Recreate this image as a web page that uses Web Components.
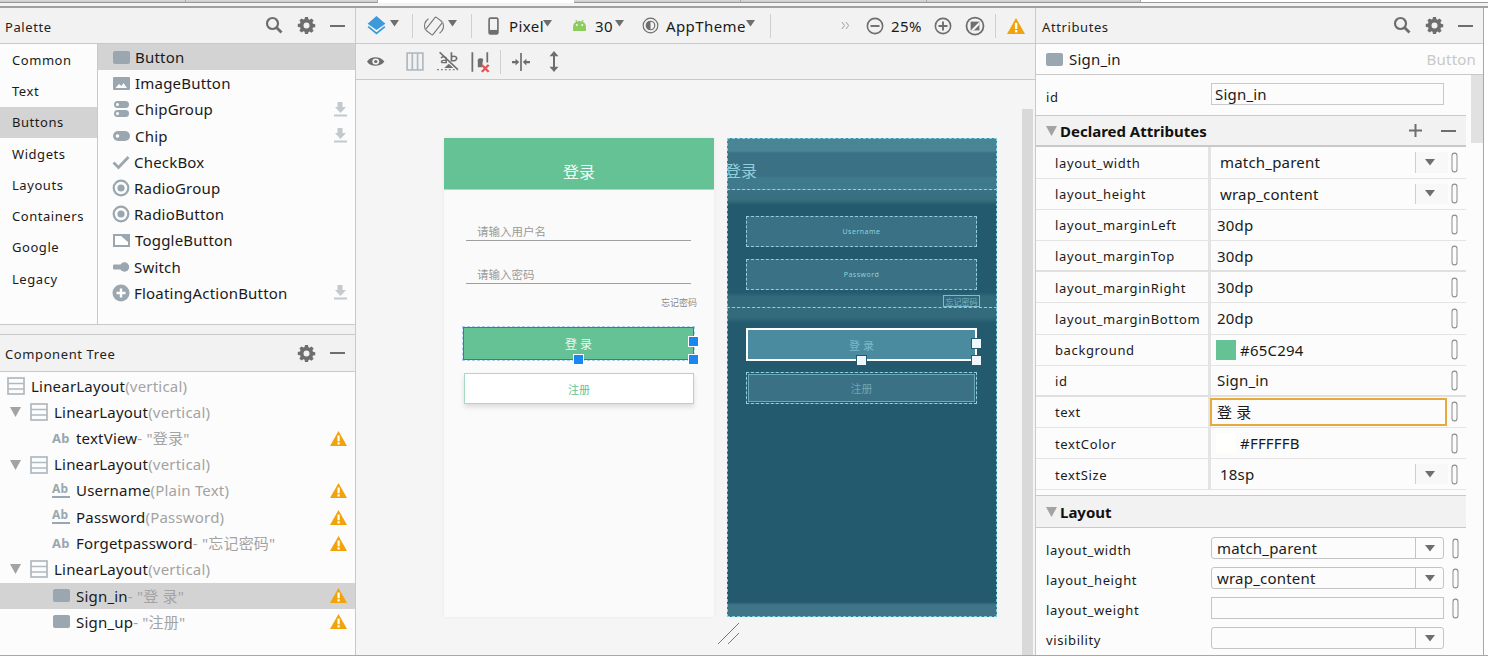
<!DOCTYPE html>
<html><head><meta charset="utf-8"><style>
html,body{margin:0;padding:0;background:#fff;width:1488px;height:660px;overflow:hidden}
body{font:15px "Noto Sans","Noto Sans CJK SC",sans-serif;color:#1a1a1a}
</style></head><body>
<ide-app></ide-app>
<script>
const ICONS={
search:'<circle cx="7.5" cy="7.5" r="5.5" fill="none" stroke="#6e6e6e" stroke-width="2.2"/><path d="M11.5 11.5l5 5" stroke="#6e6e6e" stroke-width="2.8"/>',
gear:'<path fill="#6e6e6e" fill-rule="evenodd" d="M7 1h3l.4 2.2 1.3.6 1.9-1.2 2 2-1.2 1.9.6 1.3 2.2.4v3l-2.2.4-.6 1.3 1.2 1.9-2 2-1.9-1.2-1.3.6L10 18H7l-.4-2.2-1.3-.6-1.9 1.2-2-2 1.2-1.9-.6-1.3L-.2 11V8L2 7.6l.6-1.3L1.4 4.400l2-2 1.9 1.2 1.3-.6zM8.5 6.500a3 3 0 100 6 3 3 0 000-6z"/>',
minus:'<rect x="1" y="8" width="15" height="2" fill="#6e6e6e"/>',
plus:'<path d="M8.5 2v13M2 8.500h13" stroke="#6e6e6e" stroke-width="2"/>',
button:'<rect x="1" y="2" width="17" height="13" rx="2" fill="#9aa7b0"/>',
image:'<rect x="1" y="2" width="17" height="13" rx="1" fill="#9aa7b0"/><path d="M3.5 13l3.5-4 2.5 2 2-3 3.5 5z" fill="#fff"/>',
chipgroup:'<rect x="2" y="1" width="15" height="7" rx="3.5" fill="#9aa7b0"/><rect x="2" y="10" width="15" height="7" rx="3.5" fill="#9aa7b0"/><circle cx="5.5" cy="4.5" r="1.5" fill="#fff"/><circle cx="5.5" cy="13.5" r="1.5" fill="#fff"/>',
chip:'<rect x="1" y="4" width="17" height="10" rx="5" fill="#9aa7b0"/><circle cx="5.5" cy="9" r="1.8" fill="#fff"/>',
check:'<path d="M1.5 9.5l5 5L16.5 4" fill="none" stroke="#9aa7b0" stroke-width="2.8"/>',
radio:'<circle cx="9" cy="9" r="7.300" fill="none" stroke="#9aa7b0" stroke-width="2.2"/><circle cx="9" cy="9" r="3.6" fill="#9aa7b0"/>',
toggle:'<rect x="1" y="2" width="17" height="13" fill="#9aa7b0"/><path d="M3 4h6l7 6v3H3z" fill="#fff"/>',
switch:'<rect x="1" y="6.5" width="9" height="5" rx="1" fill="#9aa7b0"/><circle cx="12.5" cy="9" r="4.7" fill="#9aa7b0"/>',
fab:'<circle cx="9" cy="9" r="8.5" fill="#9aa7b0"/><path d="M9 4.500v9M4.5 9h9" stroke="#fff" stroke-width="2.4"/>',
download:'<path d="M4.5 1h5v5H13l-5.500 6L2 6h2.500z" fill="#c3c9cd"/><rect x="1" y="13.5" width="13" height="2" fill="#c3c9cd"/>',
linear:'<g fill="none" stroke="#afb9c0" stroke-width="1.7"><rect x="1" y="1" width="16" height="16"/><path d="M1 6.5h16M1 12h16"/></g>',
arrow:'<path d="M0 1h11L5.5 11z" fill="#a3a3a3"/>',
warn:'<path d="M8.5 1L17 16H0z" fill="#f0a30a"/><rect x="7.5" y="5.5" width="2.2" height="5.8" fill="#fff"/><rect x="7.5" y="12.3" width="2.2" height="2.2" fill="#fff"/>',
layers:'<path d="M8 0l7.5 7L8 12.500.5 7z" fill="#3d9ada"/><path d="M1 9.500l7 6 7-6" fill="none" stroke="#3d9ada" stroke-width="1.5"/>',
drop:'<path d="M0 0h8L4 5.500z" fill="#6e6e6e"/>',
rotate:'<g fill="none" stroke="#777" stroke-width="1"><rect x="5" y="1.500" width="8" height="15" rx="1" transform="rotate(38 9 9)"/><path d="M1 12A8.500 8.500 0 014 2.500M17 6a8.500 8.500 0 01-3 9.500"/></g>',
phone:'<rect x="1" y="1" width="8" height="14" rx="1.2" fill="none" stroke="#6e6e6e" stroke-width="1.5"/><rect x="1" y="11.500" width="8" height="3.500" fill="#6e6e6e"/>',
android:'<path d="M1 12V7.500a6 5.500 0 0112 0V12z" fill="#8ccc5c"/><path d="M3.500 1L5 3.500M10.500 1L9 3.500" stroke="#8ccc5c"/><circle cx="4.500" cy="6" r="1" fill="#f2f2f2"/><circle cx="9.500" cy="6" r="1" fill="#f2f2f2"/>',
theme:'<circle cx="8" cy="8" r="6.900" fill="none" stroke="#6e6e6e" stroke-width="1.1"/><circle cx="8" cy="8" r="4" fill="none" stroke="#6e6e6e" stroke-width="1.1"/><path d="M8 4a4 4 0 000 8z" fill="#6e6e6e"/>',
more:'<path d="M1 1l3 3.500L1 8M5.500 1l3 3.500L5.500 8" fill="none" stroke="#999"/>',
zoomout:'<circle cx="8" cy="8" r="6.800" fill="none" stroke="#6e6e6e" stroke-width="1.4"/><path d="M4 8h8" stroke="#6e6e6e" stroke-width="1.7"/>',
zoomin:'<circle cx="8" cy="8" r="6.800" fill="none" stroke="#6e6e6e" stroke-width="1.4"/><path d="M4 8h8M8 4v8" stroke="#6e6e6e" stroke-width="1.7"/>',
fit:'<circle cx="8" cy="8" r="6.800" fill="none" stroke="#6e6e6e" stroke-width="1.4"/><rect x="4.500" y="4.500" width="7" height="7" fill="#6e6e6e"/><path d="M4.500 11.500L11.500 4.500v2.500L7 11.500z" fill="#f2f2f2"/>',
eye:'<path d="M0 6.500C2.500 1.500 10.500 1.500 13.500 6.500 10.500 11.500 2.500 11.500 0 6.500z" fill="#6e6e6e"/><circle cx="6.800" cy="6.500" r="2.700" fill="#f2f2f2"/><circle cx="6.800" cy="6.500" r="1.300" fill="#6e6e6e"/>',
cols:'<g fill="none" stroke="#afb9c0" stroke-width="1.5"><rect x="1" y="1" width="14" height="16"/><path d="M5.600 1v16M10.300 1v16"/></g>',
constraint:'<path d="M11 1v8M11 5c3-1 4 0 4 1.500S13 9 11 8" fill="none" stroke="#6e6e6e" stroke-width="1.3"/><path d="M2 1l14 15" stroke="#6e6e6e" stroke-width="1.3"/><path d="M3 6c2-2 4-1 4 1v3H4.500C3 10 3 8 5 8h2" fill="none" stroke="#6e6e6e" stroke-width="1.2"/><path d="M9 11l3.500 3.500h-7z" fill="#6e6e6e"/><path d="M0 16h16" stroke="#888" stroke-dasharray="1.500 1.500"/>',
errs:'<path d="M1 1v17M12 1v9" stroke="#6e6e6e" stroke-width="1.300"/><path d="M5 8c0-2 3-2 4-1l-1 7H5z" fill="#6e6e6e"/><path d="M8 12l5 6M13 12l-5 6" stroke="#e05555" stroke-width="1.800"/>',
hsplit:'<path d="M7.500 0v16" stroke="#6e6e6e" stroke-width="1.400"/><path d="M0 7h3V5l3 3-3 3V9H0zM15 7h-3V5L9 8l3 3V9h3z" fill="#6e6e6e"/>',
vsplit:'<path d="M5 3v12" stroke="#6e6e6e" stroke-width="2"/><path d="M5 0l4.500 4.500h-9zM5 18L.5 13.500h9z" fill="#6e6e6e"/>',
pill:'<rect x="1" y="1" width="5" height="17" rx="2.500" fill="none" stroke="#8c8c8c" stroke-width="1"/>',
ab:'<text x="0" y="12" font-size="13" font-weight="700" fill="#9aa7b0" font-family="Noto Sans">Ab</text>',
abline:'<text x="0" y="10" font-size="12" font-weight="700" fill="#9aa7b0" font-family="Noto Sans">Ab</text><rect x="0" y="13" width="18" height="2" fill="#9aa7b0"/>',
resize:'<path d="M0 21L21 0M10 21L21 10" stroke="#777" stroke-width="1"/>'
};
const SIZES={search:[19,19],gear:[18,19],minus:[17,18],plus:[17,17],button:[19,17],image:[19,17],chipgroup:[19,18],chip:[19,18],check:[18,18],radio:[18,18],toggle:[19,17],switch:[18,18],fab:[18,18],download:[15,17],linear:[18,18],arrow:[11,12],warn:[17,17],layers:[16,17],drop:[8,6],rotate:[18,18],phone:[10,16],android:[14,13],theme:[16,16],more:[10,9],zoomout:[16,16],zoomin:[16,16],fit:[16,16],eye:[14,13],cols:[16,18],constraint:[16,18],errs:[14,19],hsplit:[15,16],vsplit:[10,18],pill:[7,19],ab:[19,15],abline:[19,16],resize:[21,21]};
class El extends HTMLElement{
 render(html){ if(!this.shadowRoot) this.attachShadow({mode:'open'}); this.shadowRoot.innerHTML=html; }
}
class IdeIcon extends El{
 connectedCallback(){const n=this.getAttribute('name');const [vw,vh]=SIZES[n];const w=this.getAttribute('w')||vw,h=this.getAttribute('h')||vh;
  this.render(`<style>:host{display:inline-flex;flex:none;width:${w}px;height:${h}px}svg{display:block;overflow:visible}</style><svg width="${w}" height="${h}" viewBox="0 0 ${vw} ${vh}" preserveAspectRatio="none">${ICONS[n]}</svg>`);}
}
customElements.define('ide-icon',IdeIcon);

class PanelHeader extends El{
 connectedCallback(){this.render(`<style>:host{display:flex;align-items:center;height:36px;flex:none;box-sizing:border-box;background:#f2f2f2;border-bottom:1px solid #c9c9c9;padding:0 9px 0 5px;font-size:13px;letter-spacing:.6px;color:#222}
 .t{flex:1;padding-top:2px}.i{display:flex;align-items:center;gap:13px}</style><span class="t">${this.getAttribute('title')}</span><span class="i"><slot></slot></span>`);}
}
customElements.define('panel-header',PanelHeader);

class PalettePanel extends El{
 connectedCallback(){
  const cats=['Common','Text','Buttons','Widgets','Layouts','Containers','Google','Legacy'];
  const items=[['button','Button'],['image','ImageButton'],['chipgroup','ChipGroup',1],['chip','Chip',1],['check','CheckBox'],['radio','RadioGroup'],['radio','RadioButton'],['toggle','ToggleButton'],['switch','Switch'],['fab','FloatingActionButton',1]];
  this.render(`<style>:host{display:block;height:327px;box-sizing:border-box;background:#f2f2f2;border-bottom:1px solid #c9c9c9;flex:none}
  .b{display:flex;height:281px;background:#fcfcfc;border-bottom:1px solid #c9c9c9;box-sizing:border-box}
  .c{width:98px;box-sizing:border-box;border-right:1px solid #c9c9c9;flex:none}
  .c div{height:31.3px;display:flex;align-items:center;padding-left:12px;font-size:13px;letter-spacing:.55px}
  .c .s{background:#d3d3d3}
  .l{flex:1}
  .l div{height:26.2px;display:flex;align-items:center;padding:0 7px 0 14px;font-size:15px;letter-spacing:.2px}
  .l .s{background:#d3d3d3}
  .l span{margin-left:4px;flex:1}
  .sr{margin-right:1px}
  </style><panel-header title="Palette"><ide-icon class="sr" name="search"></ide-icon><ide-icon name="gear"></ide-icon><ide-icon name="minus"></ide-icon></panel-header>
  <div class="b"><div class="c">${cats.map(c=>`<div class="${c=='Buttons'?'s':''}">${c}</div>`).join('')}</div>
  <div class="l">${items.map((it,i)=>`<div class="${i==0?'s':''}"><ide-icon name="${it[0]}"></ide-icon><span>${it[1]}</span>${it[2]?'<ide-icon name="download"></ide-icon>':''}</div>`).join('')}</div></div>`);
 }
}
customElements.define('palette-panel',PalettePanel);

class TreePanel extends El{
 connectedCallback(){
  const rows=[[0,'linear','LinearLayout','(vertical)'],[1,'linear','LinearLayout','(vertical)'],[2,'ab','textView','- "登录"',1],[1,'linear','LinearLayout','(vertical)'],[2,'abline','Username','(Plain Text)',1],[2,'abline','Password','(Password)',1],[2,'ab','Forgetpassword','- "忘记密码"',1],[1,'linear','LinearLayout','(vertical)'],[2,'button','Sign_in','- "登 录"',1,1],[2,'button','Sign_up','- "注册"',1]];
  this.render(`<style>:host{display:block;flex:1;min-height:0;background:#fcfcfc}
  panel-header{height:37px}
  .b{padding-top:1px}
  .r{height:26.2px;display:flex;align-items:center;font-size:15px;box-sizing:border-box;padding-right:8px;letter-spacing:.2px}
  .r.s{background:#d3d3d3}
  .a{width:11px;margin-left:10px;margin-right:9px;display:flex}
  .n{flex:1;white-space:nowrap;margin-left:6px;padding-bottom:1px}
  .g{color:#a3a3a3}
  .l0{padding-left:7px}.l2{padding-left:52px}
  .l2 .n{margin-left:5px}
  </style><panel-header title="Component Tree"><ide-icon name="gear"></ide-icon><ide-icon name="minus"></ide-icon></panel-header>
  <div class="b">${rows.map(r=>`<div class="r l${r[0]} ${r[5]?'s':''}">${r[0]==1?'<span class="a"><ide-icon name="arrow"></ide-icon></span>':''}<ide-icon name="${r[1]}"></ide-icon><span class="n">${r[2]}<span class="g">${r[3]}</span></span>${r[4]?'<ide-icon name="warn"></ide-icon>':''}</div>`).join('')}</div>`);
 }
}
customElements.define('tree-panel',TreePanel);

class DesignToolbar extends El{
 connectedCallback(){
  const sp=(w)=>`<i style="width:${w}px"></i>`;
  const sep=`<b></b>`;
  const ic=(n,w,h)=>`<ide-icon name="${n}" w="${w}" h="${h}"></ide-icon>`;
  const d=`<ide-icon name="drop" class="d" w="9" h="7"></ide-icon>`;
  const t=(s,w)=>`<span style="width:${w}px">${s}</span>`;
  this.render(`<style>:host{display:block;background:#f2f2f2;flex:none}
  .t{display:flex;align-items:center;box-sizing:border-box;border-bottom:1px solid #c9c9c9;height:36px}
  .t i{display:block;flex:none}
  .t b{display:block;width:1px;height:24px;background:#d0d0d0;flex:none}
  span{font-size:15px;white-space:nowrap;flex:none;letter-spacing:.4px}
  .d{margin-top:-4px}
  </style>
  <div class="t">${sp(11)}${ic('layers',19,19)}${sp(4)}${d}${sp(13)}${sep}${sp(11)}${ic('rotate',20,20)}${sp(4)}${d}${sp(14)}${sep}${sp(16)}${ic('phone',11,18)}${sp(10)}${t('Pixel',33)}${sp(1)}${d}${sp(20)}${ic('android',15,13)}${sp(8)}${t('30',18)}${sp(2)}${d}${sp(18)}${ic('theme',17,17)}${sp(7)}${t('AppTheme',80)}${d}${sp(15)}${sep}${sp(70)}${ic('more',9,9)}${sp(16)}${ic('zoomout',18,18)}${sp(7)}${t('25%',31)}${sp(12)}${ic('zoomin',18,18)}${sp(13)}${ic('fit',20,20)}${sp(10)}${sep}${sp(11)}${ic('warn',18,18)}</div>
  <div class="t">${sp(11)}${ic('eye',18,15)}${sp(21)}${ic('cols',18,19)}${sp(13)}${ic('constraint',21,21)}${sp(13)}${ic('errs',19,22)}${sp(10)}${sep}${sp(11)}${ic('hsplit',18,18)}${sp(19)}${ic('vsplit',10,21)}</div>`);
 }
}
customElements.define('design-toolbar',DesignToolbar);

class DevicePreview extends El{
 connectedCallback(){this.render(`<style>:host{display:block;width:270px;height:479px;background:#fafafa;box-shadow:0 0 4px rgba(0,0,0,.05);flex:none;font-size:11px;color:#9a9a9a}
 .h{height:52px;background:#65c294;color:#f4fbf7;font-size:16px;display:flex;align-items:center;justify-content:center;padding-top:14px;box-sizing:border-box;border-bottom:1px solid #a7dcc0}
 .f{margin:0 23px 0 22px;height:30px;border-bottom:1px solid #a0a0a0;box-sizing:border-box;padding-left:11px;font-size:11.5px;display:flex;align-items:flex-end;line-height:16px}
 .f.u{margin-top:21px;height:30px}.f.p{margin-top:13px}
 .fg{margin:12px 17px 0 0;text-align:right;font-size:9px;line-height:14px;color:#8a8a8a}
 .btn{position:relative;margin:17px 20px 0 19px;height:33px;background:#65c294;border:1px solid #1c7ee0;outline:1px dashed #aecdf0;box-sizing:border-box;color:#eef8f2;display:flex;align-items:center;justify-content:center;font-size:12px}
 .btn2{position:relative;margin:13px 20px 0 20px;height:31px;background:#fff;border:1px solid #a8dcc2;box-sizing:border-box;color:#65c294;display:flex;align-items:center;justify-content:center;font-size:11px;box-shadow:0 3px 5px rgba(0,0,0,.12)}
 .k{position:absolute;width:9px;height:9px;background:#1a86f0;border:1px solid #fff;box-sizing:content-box}
 </style><div class="h">登录</div><div class="f u">请输入用户名</div><div class="f p">请输入密码</div><div class="fg">忘记密码</div>
 <div class="btn">登 录<span class="k" style="right:-6px;top:8px"></span><span class="k" style="right:-6px;bottom:-6px"></span><span class="k" style="left:109px;bottom:-6px"></span></div><div class="btn2">注册</div>`);}
}
customElements.define('device-preview',DevicePreview);

class BlueprintPreview extends El{
 connectedCallback(){this.render(`<style>:host{display:block;position:relative;width:270px;height:479px;background:#235a6d;flex:none;color:#8fd0dc;box-sizing:border-box;overflow:hidden}
 .o{position:absolute;inset:0;border:1px dashed #7fd0e0;pointer-events:none}
 .s{box-sizing:border-box;border-bottom:1px dashed #8fd0de}
 .s1{height:52px;background:linear-gradient(#4a8595 0 13px,#3a7184 15px 38px,#3f7a8c 40px);font-size:16px;padding:22px 0 0 0;line-height:22px}
 .s1 span{display:inline-block;margin-left:-2px}
 .s2{height:118px;background:linear-gradient(#3a7184 0,#38707f 10px,#235a6d 15px,#235a6d 102px,#326a7c 107px);padding-top:26px}
 .s3{height:309px;border:0;background:linear-gradient(#336b7d 0,#336b7d 9px,#235a6d 15px,#235a6d 294px,#3f7587 297px);padding-top:20px}
 .b{margin:0 20px 0 19px;height:31px;border:1px dashed #8fd0de;background:#3a7184;box-sizing:border-box;display:flex;align-items:center;justify-content:center;font-size:7px;letter-spacing:.5px;position:relative}
 .b+.b{margin-top:12px}
 .fg{position:absolute;right:17px;top:157px;width:37px;height:12px;border:1px solid #7fbccb;box-sizing:border-box;font-size:8px;display:flex;align-items:center;justify-content:center;overflow:hidden;white-space:nowrap;color:#78b5c4}
 .si{height:33px;border:2px solid #fff;background:#4b8ba0;font-size:11px;color:#7db9c8;letter-spacing:0}
 .su{height:32px;font-size:11px;box-shadow:inset 0 0 0 1px #235a6d,inset 0 0 0 2px #6aa9b9;color:#6aa9b9;letter-spacing:0;margin-top:11px!important}
 .k{position:absolute;width:9px;height:9px;background:#eef7fb;border:1px solid #235a6d;box-sizing:content-box}
 </style><div class="s s1"><span>登录</span></div><div class="s s2"><div class="b">Username</div><div class="b">Password</div></div><div class="fg">忘记密码</div>
 <div class="s s3"><div class="b si">登 录<span class="k" style="right:-7px;top:8px"></span><span class="k" style="right:-7px;bottom:-7px"></span><span class="k" style="left:108px;bottom:-7px"></span></div><div class="b su">注册</div></div><div class="o"></div>`);}
}
customElements.define('blueprint-preview',BlueprintPreview);

class DesignCanvas extends El{
 connectedCallback(){this.render(`<style>:host{display:flex;flex:1;min-height:0;background:#f5f5f5;position:relative;overflow:hidden}
 .p{display:flex;gap:13px;padding:58px 0 0 88px;flex:1;align-items:flex-start}
 .sb{width:11px;background:#d9d9d9;margin-top:29px;flex:none}
 .st{width:2px;flex:none}
 .rs{position:absolute;left:362px;top:543px}
 </style><div class="p"><device-preview></device-preview><blueprint-preview></blueprint-preview></div><div class="sb"></div><div class="st"></div><ide-icon class="rs" name="resize"></ide-icon>`);}
}
customElements.define('design-canvas',DesignCanvas);

class AttrRow extends El{
 connectedCallback(){
  const a=n=>this.getAttribute(n);
  const has=n=>this.hasAttribute(n);
  const swatch=a('swatch');
  this.render(`<style>:host{display:grid;grid-template-columns:172px 1fr 18px;height:31.2px;box-sizing:border-box;border-bottom:1px solid #e4e4e4;align-items:center;background:#fcfcfc}
  :host([thick]){border-bottom:2px solid #e0e0e0}
  .l{padding-left:19px;font-size:13px;letter-spacing:.62px;white-space:nowrap;padding-top:1px}
  .v{height:100%;border-left:3px solid #e4e4e4;box-sizing:border-box;display:flex;align-items:center;font-size:15px;padding-left:${has('dd')?'9px':'6px'};position:relative;white-space:nowrap;letter-spacing:.2px}
  .v.f::after{content:"";position:absolute;left:-1px;top:1px;bottom:1px;right:1px;border:2px solid #e5a93c}
  .dd{margin-left:auto;width:33px;align-self:stretch;margin-top:5px;margin-bottom:5px;border-left:1px solid #cfcfcf;display:flex;align-items:center;padding-left:9px;box-sizing:border-box;background:#f8f8f8}
  .sw{width:20px;height:20px;margin-right:4px;flex:none;margin-left:-1px}
  .p{display:flex;justify-content:center;margin-left:-5px}
  </style><div class="l">${a('label')}</div><div class="v ${has('focus')?'f':''}">${swatch?`<span class="sw" style="background:${swatch}"></span>`:''}<span>${a('value')}</span>${has('dd')?'<span class="dd"><ide-icon name="drop" w="10" h="7"></ide-icon></span>':''}</div><div class="p"><ide-icon name="pill" h="21"></ide-icon></div>`);
 }
}
customElements.define('attr-row',AttrRow);

class FormRow extends El{
 connectedCallback(){
  const a=n=>this.getAttribute(n);const has=n=>this.hasAttribute(n);
  this.render(`<style>:host{display:grid;grid-template-columns:175px 233px 1fr;height:30px;align-items:center}
  .l{padding-left:10px;font-size:13px;letter-spacing:.62px;padding-top:3px}
  .b{height:22px;border:1px solid #c4c4c4;border-radius:${has('dd')?'3px':'0'};box-sizing:border-box;background:#fcfcfc;display:flex;align-items:center;font-size:15px;padding-left:5px;overflow:hidden;letter-spacing:.2px}
  .dd{margin-left:auto;width:28px;height:100%;border-left:1px solid #c4c4c4;display:flex;align-items:center;justify-content:center;box-sizing:border-box;flex:none}
  .p{padding-left:8px;display:flex}
  </style><div class="l">${a('label')}</div><div class="b"><span>${a('value')||''}</span>${has('dd')?'<span class="dd"><ide-icon name="drop" w="10" h="7"></ide-icon></span>':''}</div><div class="p">${has('nopill')?'':'<ide-icon name="pill" h="21"></ide-icon>'}</div>`);
 }
}
customElements.define('form-row',FormRow);

class SectionHead extends El{
 connectedCallback(){this.render(`<style>:host{display:flex;align-items:center;height:32.4px;box-sizing:border-box;background:#f2f2f2;padding:0 9px 0 10px;font-size:15px;font-weight:700;color:#111;border-top:1px solid #c9c9c9;border-bottom:2px solid #c9c9c9}
  .t{margin-left:3px;flex:1}.i{display:flex;gap:16px;align-items:center}
  </style><ide-icon name="arrow"></ide-icon><span class="t">${this.getAttribute('title')}</span><span class="i"><slot></slot></span>`);}
}
customElements.define('section-head',SectionHead);

class AttrPanel extends El{
 connectedCallback(){this.render(`<style>:host{display:flex;flex-direction:column;height:100%;background:#fcfcfc;border-right:1px solid #a8a8a8;box-sizing:border-box}
 panel-header{padding-left:6px}
 .sr{margin-right:1px}
 .sel{display:flex;align-items:center;height:31px;box-sizing:border-box;border-bottom:1px solid #c9c9c9;padding:0 7px 0 9px;font-size:15px;letter-spacing:.2px}
 .sel span{margin-left:5px}.sel .r{margin-left:auto;color:#c8c8c8}
 .w{display:flex;flex:1;min-height:0}.m{width:430px;flex:none}.sb{margin-left:5px;width:12px;height:68px;background:#e1e1e1;flex:none}
 .id{display:grid;grid-template-columns:175px 233px;height:40px;align-items:center;font-size:13px;box-sizing:border-box}
 .id .l{padding:4px 0 0 10px;letter-spacing:.6px}
 .id .b{height:22px;border:1px solid #c9c9c9;box-sizing:border-box;font-size:15px;padding-left:3px;display:flex;align-items:center;margin-top:-2px;letter-spacing:.2px}
 form-row:first-of-type{margin-top:5px}
 .lay{margin-top:4.6px;height:33px;border-bottom-width:1px}
 </style><panel-header title="Attributes"><ide-icon class="sr" name="search"></ide-icon><ide-icon name="gear"></ide-icon><ide-icon name="minus"></ide-icon></panel-header>
 <div class="sel"><ide-icon name="button"></ide-icon><span>Sign_in</span><span class="r">Button</span></div>
 <div class="w"><div class="m"><div class="id"><div class="l">id</div><div class="b">Sign_in</div></div>
 <section-head title="Declared Attributes"><ide-icon name="plus"></ide-icon><ide-icon name="minus"></ide-icon></section-head>
 <attr-row label="layout_width" value="match_parent" dd></attr-row>
 <attr-row label="layout_height" value="wrap_content" dd></attr-row>
 <attr-row label="layout_marginLeft" value="30dp"></attr-row>
 <attr-row label="layout_marginTop" value="30dp" thick></attr-row>
 <attr-row label="layout_marginRight" value="30dp"></attr-row>
 <attr-row label="layout_marginBottom" value="20dp"></attr-row>
 <attr-row label="background" value="#65C294" swatch="#65c294"></attr-row>
 <attr-row label="id" value="Sign_in" thick></attr-row>
 <attr-row label="text" value="登 录" focus></attr-row>
 <attr-row label="textColor" value="#FFFFFB" swatch="#fffffb"></attr-row>
 <attr-row label="textSize" value="18sp" dd></attr-row>
 <section-head class="lay" title="Layout"></section-head>
 <form-row label="layout_width" value="match_parent" dd></form-row>
 <form-row label="layout_height" value="wrap_content" dd></form-row>
 <form-row label="layout_weight"></form-row>
 <form-row label="visibility" dd nopill></form-row>
 </div><div class="sb"></div></div>`);}
}
customElements.define('attr-panel',AttrPanel);

class IdeApp extends El{
 connectedCallback(){this.render(`<style>:host{display:flex;flex-direction:column;width:1488px;height:660px;background:#fff}
 .tabs{height:8px;flex:none;box-sizing:border-box;border-bottom:2px solid #a0a0a0;background:#f4f4f4}
 .row{display:flex;height:3px}
 .row i{display:block;box-sizing:border-box;border-right:1px solid #aaa;border-bottom:1px solid #999;background:linear-gradient(#dcdcdc,#c6c6c6)}
 .row i.w{background:#fff;border:0}
 .m{flex:1;min-height:0;display:flex;border-bottom:1px solid #a8a8a8;height:648px}
 .left{width:356px;flex:none;display:flex;flex-direction:column;border-right:1px solid #c9c9c9;box-sizing:border-box}
 .center{width:680px;flex:none;display:flex;flex-direction:column;border-right:1px solid #c9c9c9;box-sizing:border-box}
 .right{flex:none;width:448px}
 .end{flex:1}
 </style><div class="tabs"><div class="row"><i style="width:186px"></i><i style="width:192px"></i><i class="w" style="width:196px"></i><i style="width:167px"></i><i style="width:186px"></i><i style="width:214px"></i><i style="flex:1;background:#fff;border-right:0"></i></div></div>
 <div class="m"><div class="left"><palette-panel></palette-panel><tree-panel></tree-panel></div><div class="center"><design-toolbar></design-toolbar><design-canvas></design-canvas></div><div class="right"><attr-panel></attr-panel></div><div class="end"></div></div>
 <div style="height:4px"></div>`);}
}
customElements.define('ide-app',IdeApp);
</script></body></html>
